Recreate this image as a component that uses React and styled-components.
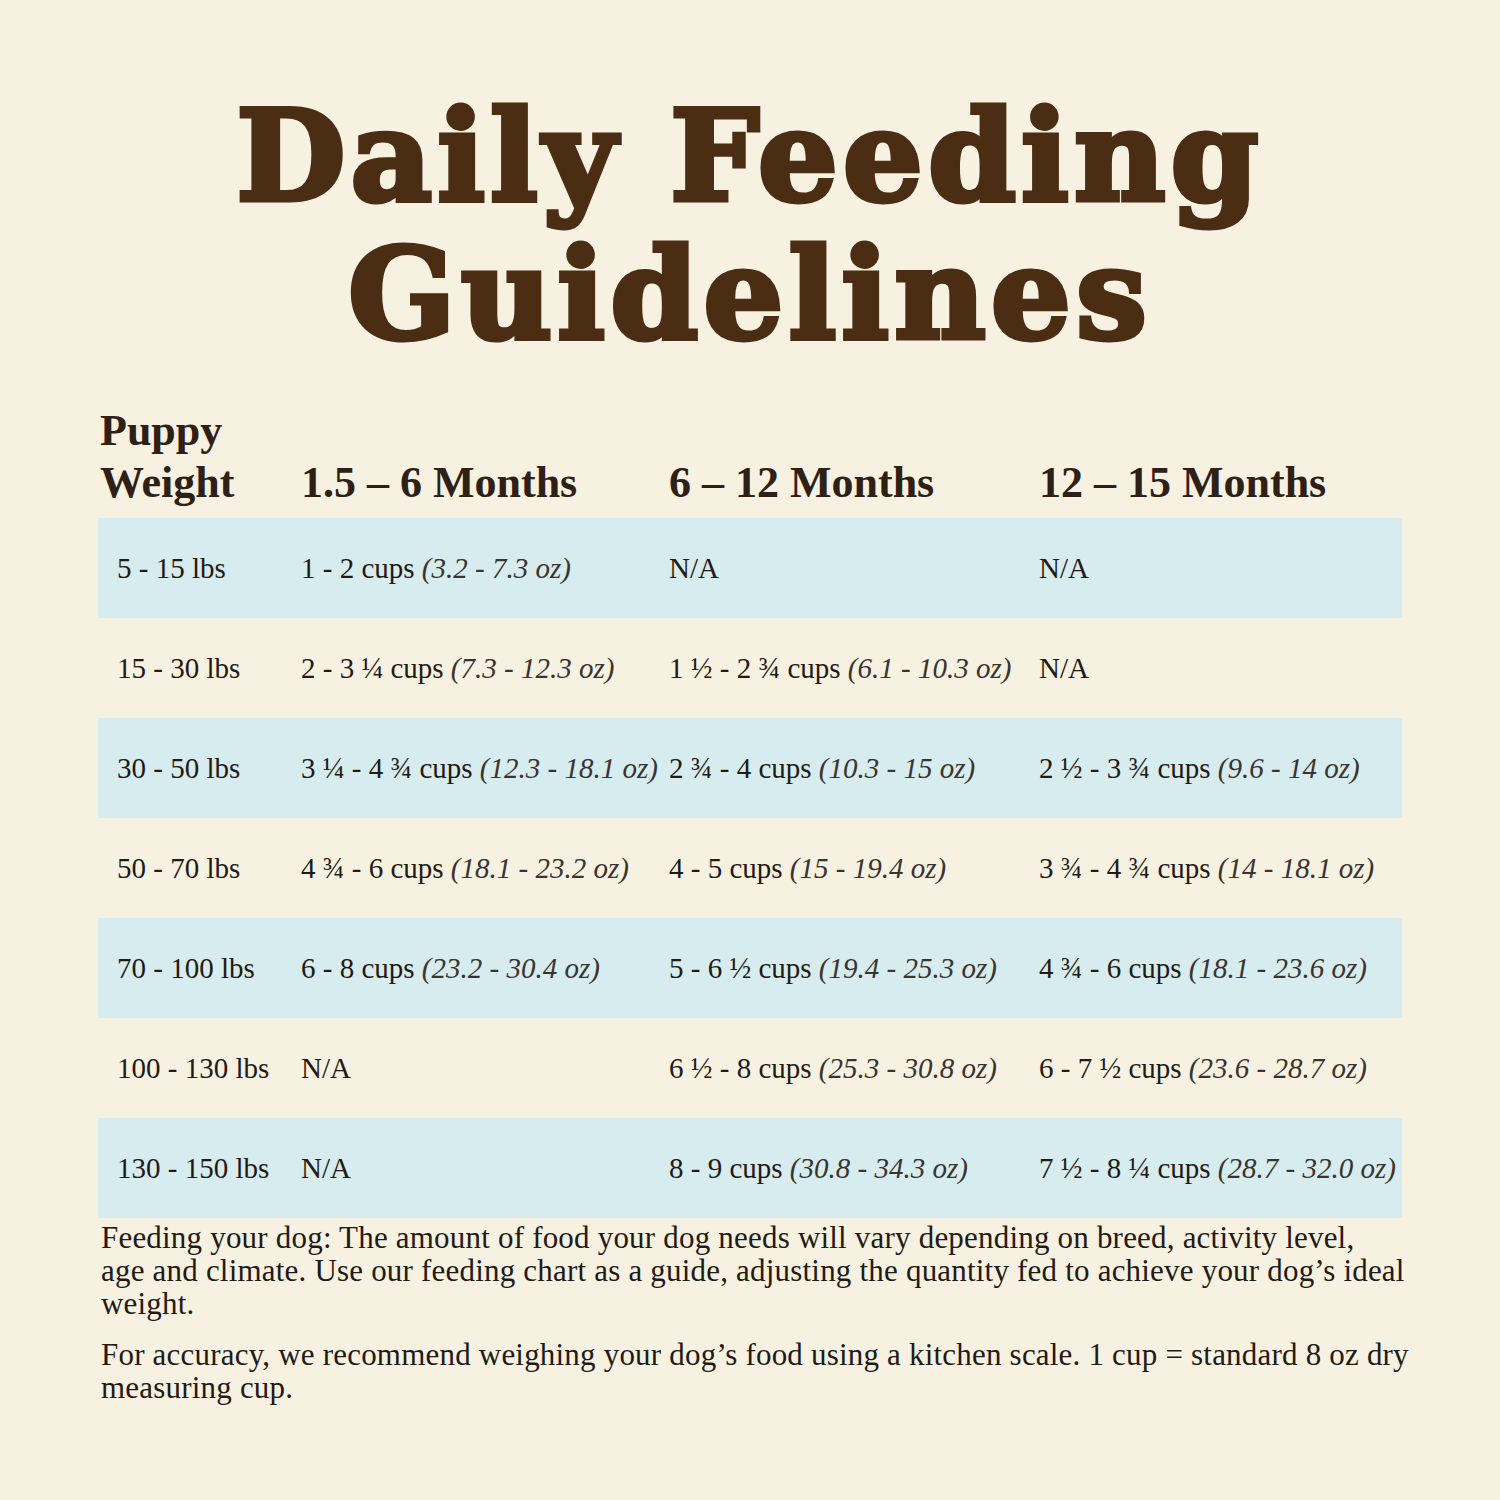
import React from "react";
import styled, { createGlobalStyle } from "styled-components";

const GlobalStyle = createGlobalStyle`
  html, body {
    margin: 0;
    padding: 0;
    background: #f6f1e1;
  }
`;

const Page = styled.div`
  width: 1500px;
  height: 1500px;
  background: #f6f1e1;
  box-sizing: border-box;
  padding: 87px 98px 0 98px;
  font-family: "Liberation Serif", serif;
  color: #231a14;
`;

const Title = styled.h1`
  margin: 0 0 42px;
  text-align: center;
  font-family: "DejaVu Serif", serif;
  font-weight: 700;
  font-size: 126px;
  line-height: 138px;
  color: #4a2d12;
  -webkit-text-stroke: 5px #4a2d12;
  text-shadow: 0 0 1.5px #24140a, 0 0 1px #24140a;
  letter-spacing: 5px;
`;

const Grid = styled.div`
  display: grid;
  grid-template-columns: 203px 368px 370px 1fr;
`;

const HeadCell = styled.div`
  align-self: end;
  font-weight: 700;
  font-size: 44px;
  line-height: 52px;
  color: #2f2016;
  padding: 0 0 9px ${(p) => (p.$first ? "2px" : "0")};
`;

const Row = styled.div`
  display: grid;
  grid-template-columns: 203px 368px 370px 1fr;
  height: 100px;
  align-items: center;
  background: ${(p) => (p.$shaded ? "#d7ecee" : "transparent")};
`;

const Cell = styled.div`
  font-size: 29px;
  white-space: nowrap;
  padding-left: ${(p) => (p.$first ? "19px" : "0")};
`;

const Oz = styled.span`
  font-style: italic;
  font-weight: 300;
  color: #3a3430;
`;

const Note = styled.p`
  margin: 3px 0 0 3px;
  font-size: 31px;
  letter-spacing: 0.2px;
  line-height: 33px;
  white-space: nowrap;
  & + & {
    margin-top: 18px;
  }
`;

const rows = [
  ["5 - 15 lbs", ["1 - 2 cups", "3.2 - 7.3 oz"], null, null],
  ["15 - 30 lbs", ["2 - 3 ¼ cups", "7.3 - 12.3 oz"], ["1 ½ - 2 ¾ cups", "6.1 - 10.3 oz"], null],
  ["30 - 50 lbs", ["3 ¼ - 4 ¾ cups", "12.3 - 18.1 oz"], ["2 ¾ - 4 cups", "10.3 - 15 oz"], ["2 ½ - 3 ¾ cups", "9.6 - 14 oz"]],
  ["50 - 70 lbs", ["4 ¾ - 6 cups", "18.1 - 23.2 oz"], ["4 - 5 cups", "15 - 19.4 oz"], ["3 ¾ - 4 ¾ cups", "14 - 18.1 oz"]],
  ["70 - 100 lbs", ["6 - 8 cups", "23.2 - 30.4 oz"], ["5 - 6 ½ cups", "19.4 - 25.3 oz"], ["4 ¾ - 6 cups", "18.1 - 23.6 oz"]],
  ["100 - 130 lbs", null, ["6 ½ - 8 cups", "25.3 - 30.8 oz"], ["6 - 7 ½ cups", "23.6 - 28.7 oz"]],
  ["130 - 150 lbs", null, ["8 - 9 cups", "30.8 - 34.3 oz"], ["7 ½ - 8 ¼ cups", "28.7 - 32.0 oz"]],
];

const Amount = ({ value }) =>
  value ? (
    <Cell>
      {value[0]} <Oz>({value[1]})</Oz>
    </Cell>
  ) : (
    <Cell>N/A</Cell>
  );

export default function App() {
  return (
    <Page>
      <GlobalStyle />
      <Title>
        Daily Feeding
        <br />
        Guidelines
      </Title>
      <Grid>
        <HeadCell $first>
          Puppy
          <br />
          Weight
        </HeadCell>
        <HeadCell>1.5 – 6 Months</HeadCell>
        <HeadCell>6 – 12 Months</HeadCell>
        <HeadCell>12 – 15 Months</HeadCell>
      </Grid>
      {rows.map((r, i) => (
        <Row key={r[0]} $shaded={i % 2 === 0}>
          <Cell $first>{r[0]}</Cell>
          <Amount value={r[1]} />
          <Amount value={r[2]} />
          <Amount value={r[3]} />
        </Row>
      ))}
      <Note>
        Feeding your dog: The amount of food your dog needs will vary depending on breed, activity level,
        <br />
        age and climate. Use our feeding chart as a guide, adjusting the quantity fed to achieve your dog’s ideal
        <br />
        weight.
      </Note>
      <Note>
        For accuracy, we recommend weighing your dog’s food using a kitchen scale. 1 cup = standard 8 oz dry
        <br />
        measuring cup.
      </Note>
    </Page>
  );
}
